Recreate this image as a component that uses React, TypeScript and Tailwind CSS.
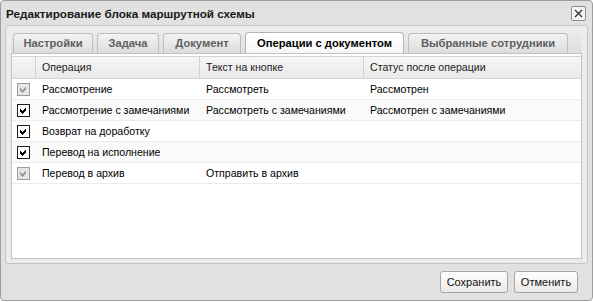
import React from 'react';

const TABS = [
  { label: 'Настройки', w: 'w-[80px]' },
  { label: 'Задача', w: 'w-[62px]' },
  { label: 'Документ', w: 'w-[78px]' },
  { label: 'Операции с документом', w: 'w-[159px]', active: true },
  { label: 'Выбранные сотрудники', w: 'w-[160px]' },
];

const ROWS = [
  { op: 'Рассмотрение', btn: 'Рассмотреть', status: 'Рассмотрен', disabled: true },
  { op: 'Рассмотрение с замечаниями', btn: 'Рассмотреть с замечаниями', status: 'Рассмотрен с замечаниями' },
  { op: 'Возврат на доработку', btn: '', status: '' },
  { op: 'Перевод на исполнение', btn: '', status: '' },
  { op: 'Перевод в архив', btn: 'Отправить в архив', status: '', disabled: true },
];

const COLS = 'grid grid-cols-[24px_164px_164px_1fr]';

function CheckBox({ disabled }: { disabled?: boolean }) {
  return (
    <svg width="13" height="13" viewBox="0 0 13 13" shapeRendering="crispEdges">
      <rect x="0.5" y="0.5" width="12" height="12" fill={disabled ? '#e6e6e6' : '#fff'} stroke={disabled ? '#9c9c9c' : '#1c1c1c'} />
      <path
        d="M3 5 L5 7 L9 3 L9 6 L5 10 L3 8 Z"
        fill={disabled ? '#9c9c9c' : '#000'}
      />
    </svg>
  );
}

export default function App() {
  return (
    <div className="w-[593px] h-[302px] overflow-hidden font-['Liberation_Sans',Arial,sans-serif] text-[10.6px] text-black">
      <div className="w-[593px] h-[301px] flex flex-col rounded-[4px] border border-[#9d9d9d] bg-[#e1e1e1]">
        {/* Title */}
        <div className="h-[24px] flex items-center justify-between pl-[5px] pr-[6px]">
          <span className="text-[11.7px] font-bold text-[#1a1a1a] pt-[2px]">Редактирование блока маршрутной схемы</span>
          <div className="w-[15px] h-[15px] mt-[1px] rounded-[2px] border border-[#8c8c8c] bg-[#f4f4f4] flex items-center justify-center">
            <svg width="9" height="9" viewBox="0 0 9 9">
              <path d="M1 1 L8 8 M8 1 L1 8" stroke="#333" strokeWidth="1.3" />
            </svg>
          </div>
        </div>

        {/* Panel */}
        <div className="mx-[4px] h-[239px] rounded-[3px] border border-[#c6c6c6] bg-[#ececec] flex flex-col px-[5px] pt-[5px]">
          <div className="h-[22px] flex items-end gap-[4px] pl-[2px] bg-gradient-to-b from-[#ececec] to-[#dedede]">
            {TABS.map((t) => (
              <div
                key={t.label}
                className={`${t.w} flex items-center justify-center rounded-t-[4px] border border-b-0 font-bold text-[11.2px] ${
                  t.active
                    ? 'h-[21px] border-[#b4b4b4] bg-gradient-to-b from-white to-[#f6f6f6] text-black'
                    : 'h-[20px] border-[#bdbdbd] bg-gradient-to-b from-[#f4f4f4] to-[#dcdcdc] text-[#606060]'
                }`}
              >
                {t.label}
              </div>
            ))}
          </div>

          {/* Grid */}
          <div className="h-[206px] border border-[#c2c2c2] bg-white pt-[2px] flex flex-col">
            <div className={`${COLS} h-[23px] bg-gradient-to-b from-[#f7f7f7] to-[#e9e9e9] border-y border-[#d4d4d4] text-[#222]`}>
              <div className="border-r border-[#d0d0d0]" />
              <div className="border-r border-[#d0d0d0] pl-[6px] pt-[1px] flex items-center">Операция</div>
              <div className="border-r border-[#d0d0d0] pl-[6px] pt-[1px] flex items-center">Текст на кнопке</div>
              <div className="pl-[6px] pt-[1px] flex items-center">Статус после операции</div>
            </div>
            {ROWS.map((r, i) => (
              <div
                key={r.op}
                className={`${COLS} h-[21px] border-b border-[#ececec] ${i % 2 === 1 ? 'bg-[#fafafa]' : 'bg-white'}`}
              >
                <div className="flex items-center pl-[5px]">
                  <CheckBox disabled={r.disabled} />
                </div>
                <div className="pl-[6px] pt-[1px] flex items-center">{r.op}</div>
                <div className="pl-[6px] pt-[1px] flex items-center">{r.btn}</div>
                <div className="pl-[6px] pt-[1px] flex items-center">{r.status}</div>
              </div>
            ))}
          </div>
        </div>

        {/* Footer */}
        <div className="flex-1 flex items-center justify-end gap-[6px] pr-[14px]">
          <button className="w-[68px] h-[22px] rounded-[3px] border border-[#a6a6a6] bg-gradient-to-b from-white to-[#eaeaea] text-[11px] text-[#111]">
            Сохранить
          </button>
          <button className="w-[64px] h-[22px] rounded-[3px] border border-[#a6a6a6] bg-gradient-to-b from-white to-[#eaeaea] text-[11px] text-[#111]">
            Отменить
          </button>
        </div>
      </div>
    </div>
  );
}
